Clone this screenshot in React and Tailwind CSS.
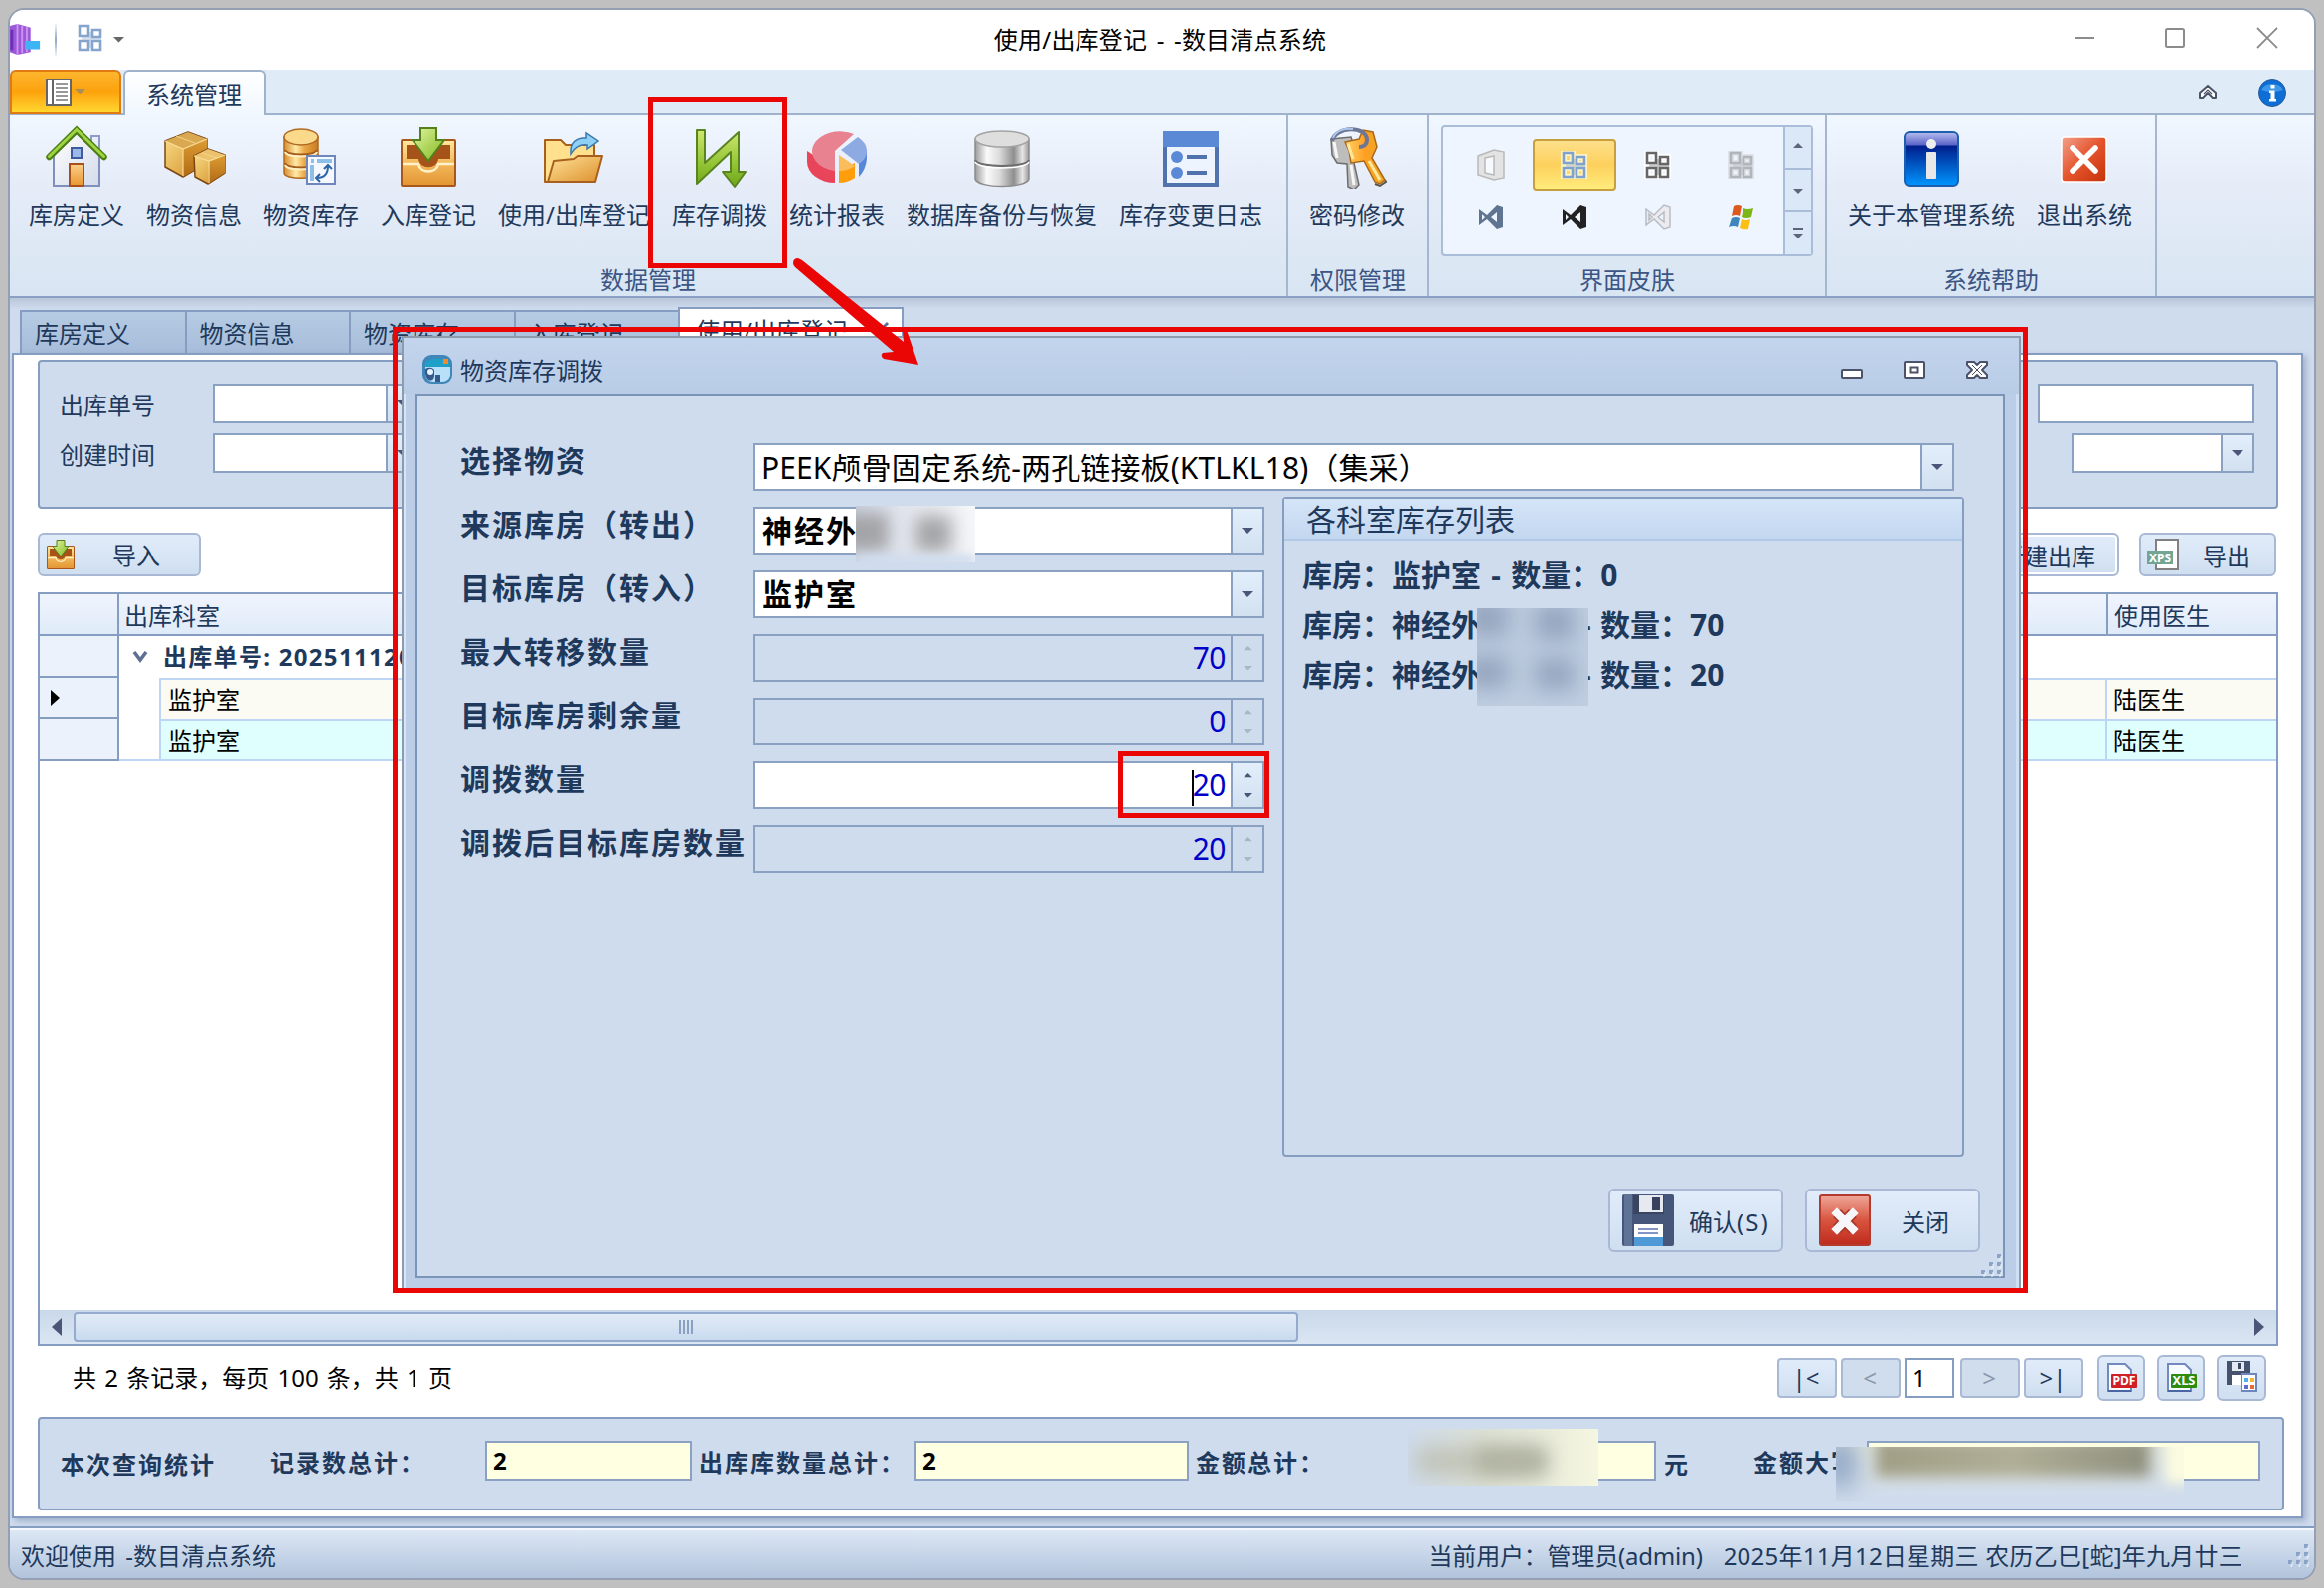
/*
==================================================
INVENTORY SYSTEM - STOCK TRANSFER SCREEN
--------------------------------------------------
Components:
TitleBar, Ribbon, DocumentTabs, OutboundPage,
StatusBar, TransferDialog

Purpose:
Desktop style page for outbound registration with
the stock transfer dialog opened on top of it.
==================================================
*/

import clsx from "clsx";

/*
==========================================
RIBBON ICONS (64 x 64)
==========================================
*/
const HouseIcon = () => (
  <svg viewBox="0 0 64 64" className="size-16">
    <defs>
      <linearGradient id="wall" x1="0" y1="0" x2="1" y2="1">
        <stop offset="0" stopColor="#ffffff" />
        <stop offset="1" stopColor="#d3daea" />
      </linearGradient>
      <linearGradient id="door" x1="0" y1="0" x2="0" y2="1">
        <stop offset="0" stopColor="#fbd08a" />
        <stop offset="1" stopColor="#e8962f" />
      </linearGradient>
    </defs>
    <rect x="47" y="11" width="8" height="18" fill="#e9eefa" stroke="#8d9cc6" strokeWidth="2" />
    <path d="M9 30 32 8 55 30V61H9Z" fill="url(#wall)" stroke="#7f90bd" strokeWidth="2" />
    <path d="M4.500 32 32 5 59.500 32" fill="none" stroke="#4d7f12" strokeWidth="6.500" strokeLinecap="round" />
    <path d="M4.500 31.500 32 4.500 59.500 31.500" fill="none" stroke="#9fd545" strokeWidth="3" strokeLinecap="round" />
    <rect x="27" y="23" width="10" height="10" fill="#9db9ea" stroke="#3c5c9f" strokeWidth="2" />
    <rect x="25" y="39" width="14" height="22" fill="url(#door)" stroke="#a8501a" strokeWidth="2" />
  </svg>
);

const BoxesIcon = () => (
  <svg viewBox="0 0 64 64" className="size-16">
    <defs>
      <linearGradient id="boxl" x1="0" y1="0" x2="1" y2="1">
        <stop offset="0" stopColor="#fbe08a" />
        <stop offset="1" stopColor="#d08a25" />
      </linearGradient>
      <linearGradient id="boxr" x1="0" y1="0" x2="0" y2="1">
        <stop offset="0" stopColor="#dd9c34" />
        <stop offset="1" stopColor="#b06a13" />
      </linearGradient>
    </defs>
    <g stroke="#7a4712" strokeWidth="1.500" strokeLinejoin="round">
      <path d="M3 16 26 7 45 14V38L21 52 3 42Z" fill="url(#boxl)" />
      <path d="M21 24 45 14V38L21 52Z" fill="url(#boxr)" stroke="none" />
      <path d="M3 16 26 7 45 14 21 24Z" fill="#d9a850" stroke="none" />
      <path d="M32 31 46 24 63 30V48L46 59 33 52Z" fill="url(#boxl)" />
      <path d="M47 36 63 30V48L46 59Z" fill="url(#boxr)" stroke="none" />
      <path d="M32 31 46 24 63 30 47 36Z" fill="#edc26c" stroke="none" />
    </g>
    <path d="M3 16 21 24 45 14M21 24V51M32 31 47 36 63 30M47 36V58" fill="none" stroke="#f8dc97" strokeWidth="1.200" />
    <path d="M14 11 33 18M40 28 55 33" fill="none" stroke="#f5d48a" strokeWidth="1" />
  </svg>
);

const StockIcon = () => (
  <svg viewBox="0 0 64 64" className="size-16">
    <defs>
      <linearGradient id="gold" x1="0" y1="0" x2="1" y2="0">
        <stop offset="0" stopColor="#d98c2a" />
        <stop offset="0.350" stopColor="#ffe9a8" />
        <stop offset="0.600" stopColor="#eba847" />
        <stop offset="1" stopColor="#c97a22" />
      </linearGradient>
    </defs>
    <path d="M5 12V48C5 55 39 55 39 48V12Z" fill="url(#gold)" stroke="#b06a22" strokeWidth="1.500" />
    <ellipse cx="22" cy="12" rx="17" ry="8" fill="#fbd98b" stroke="#b06a22" strokeWidth="1.500" />
    <path d="M6 25C8 31 36 31 38 25M6 38C8 44 36 44 38 38" fill="none" stroke="#a35c1b" strokeWidth="2" />
    <path d="M6 27C8 33 36 33 38 27M6 40C8 46 36 46 38 40" fill="none" stroke="#fff0c4" strokeWidth="2" />
    <rect x="28" y="31" width="28" height="28" fill="#f5f9ff" stroke="#6f86bd" strokeWidth="2" />
    <path d="M32 36h3M38 36h15M33 40v16" stroke="#8cc0e8" strokeWidth="4" />
    <path d="M38 53c6 0 11-3 11-12M41 49l-4 4 4 4M45 44l4-4 4 4" fill="none" stroke="#2d66a8" strokeWidth="2" />
  </svg>
);

const TrayIcon = ({ className = "size-16" }) => (
  <svg viewBox="0 0 64 64" className={className}>
    <defs>
      <linearGradient id="tray" x1="0" y1="0" x2="0" y2="1">
        <stop offset="0" stopColor="#ffe9a0" />
        <stop offset="0.500" stopColor="#f3b95c" />
        <stop offset="1" stopColor="#e39432" />
      </linearGradient>
      <linearGradient id="arrowdown" x1="0" y1="0" x2="1" y2="1">
        <stop offset="0" stopColor="#e2f5a0" />
        <stop offset="1" stopColor="#7fb81f" />
      </linearGradient>
    </defs>
    <rect x="5" y="15" width="54" height="46" rx="1" fill="url(#tray)" stroke="#a8561c" strokeWidth="2" />
    <path d="M10 20H54V34H42C41 45 23 45 22 34H10Z" fill="#a55318" />
    <path d="M6 39H22C24 49 40 49 42 39H58" fill="none" stroke="#fff2c8" strokeWidth="2.500" />
    <path d="M24 3H40V15H48L32 36 16 15H24Z" fill="url(#arrowdown)" stroke="#56801c" strokeWidth="2" />
  </svg>
);

const FolderIcon = () => (
  <svg viewBox="0 0 64 64" className="size-16">
    <defs>
      <linearGradient id="fold" x1="0" y1="0" x2="1" y2="1">
        <stop offset="0" stopColor="#ffe39a" />
        <stop offset="1" stopColor="#dd8f2b" />
      </linearGradient>
    </defs>
    <path d="M3 57V15H19L24 20H53V57Z" fill="#ffe08d" stroke="#a8601f" strokeWidth="2" strokeLinejoin="round" />
    <path d="M6 57 12 36 32 34 36 31H61L54 57Z" fill="url(#fold)" stroke="#a8601f" strokeWidth="2" strokeLinejoin="round" />
    <path d="M29 29C28 18 34 12 45 13V8L57 16 46 24V20C38 19 33 22 29 29Z" fill="#8fd0f5" stroke="#3b78b0" strokeWidth="1.500" />
  </svg>
);

const TransferIcon = () => (
  <svg viewBox="0 0 64 64" className="size-16">
    <defs>
      <linearGradient id="zig" x1="0" y1="0" x2="0" y2="1">
        <stop offset="0" stopColor="#cfe76f" />
        <stop offset="0.600" stopColor="#92c434" />
        <stop offset="1" stopColor="#6fa51c" />
      </linearGradient>
    </defs>
    <path d="M9 5H17V38L51 7V47H58L47 62 35 47H43V27L9 59Z" fill="url(#zig)" stroke="#5a8420" strokeWidth="2" strokeLinejoin="round" />
  </svg>
);

const PieIcon = () => (
  <svg viewBox="0 0 64 64" className="size-16">
    <path d="M2 26V37A28 21 0 0 0 30 58V44Z" fill="#e8455a" />
    <path d="M30 26 49 9A28 20 0 1 0 30 46Z" fill="#e98290" />
    <path d="M34 46 50 38V53Q43 58 34 58Z" fill="#ff9d0a" />
    <path d="M34 30 50 41Q43 46 34 46Z" fill="#f9bd5c" />
    <path d="M54 38 62 24V34Q61 45 54 52Z" fill="#5787d8" />
    <path d="M36 25 53 12Q62 18 62 26 62 34 54 39Z" fill="#8daae2" />
  </svg>
);

const DatabaseIcon = () => (
  <svg viewBox="0 0 64 64" className="size-16">
    <defs>
      <linearGradient id="steel" x1="0" y1="0" x2="1" y2="0">
        <stop offset="0" stopColor="#9c9c9c" />
        <stop offset="0.220" stopColor="#fafafa" />
        <stop offset="0.450" stopColor="#dcdcdc" />
        <stop offset="0.720" stopColor="#8e8e8e" />
        <stop offset="0.880" stopColor="#e6e6e6" />
        <stop offset="1" stopColor="#9a9a9a" />
      </linearGradient>
    </defs>
    <path d="M5 14V54C7 64 57 64 59 54V14Z" fill="url(#steel)" stroke="#8b8b8b" strokeWidth="1.500" />
    <ellipse cx="32" cy="14" rx="27" ry="8" fill="#dedede" stroke="#a3a3a3" strokeWidth="1.500" />
    <path d="M5 35C8 43 56 43 59 35" fill="none" stroke="#6d6d6d" strokeWidth="2" />
    <path d="M5 37C8 45 56 45 59 37" fill="none" stroke="#ffffff" strokeWidth="1.500" />
  </svg>
);

const LogIcon = () => (
  <svg viewBox="0 0 64 64" className="size-16">
    <rect x="6" y="8" width="52" height="52" fill="#eef4fd" stroke="#5073ad" strokeWidth="4" />
    <rect x="4" y="6" width="56" height="16" fill="#5b89d6" />
    <circle cx="18" cy="32" r="6" fill="#5b89d6" />
    <circle cx="18" cy="48" r="6" fill="#5b89d6" />
    <path d="M28 32H48M28 48H48" stroke="#5073ad" strokeWidth="4" />
  </svg>
);

const KeysIcon = () => (
  <svg viewBox="0 0 64 64" className="size-16">
    <defs>
      <linearGradient id="keyg" x1="0" y1="0" x2="1" y2="0">
        <stop offset="0" stopColor="#ffd56b" />
        <stop offset="0.500" stopColor="#ff9f22" />
        <stop offset="1" stopColor="#e9a825" />
      </linearGradient>
    </defs>
    <path d="M6 14 26 12 32 32 29 38 34 60 29 65 23 62 22 39 12 38 7 30Z" fill="#bdbdbd" stroke="#6d6d6d" strokeWidth="1.500" />
    <path d="M9 17 12 33M26 40 29 60" stroke="#f6f6f6" strokeWidth="3" />
    <path d="M60 55 61 57 55 61 50 59" fill="none" stroke="#55534c" strokeWidth="2" />
    <path d="M20 17 34 14 38 5 48 7 52 22 47 33 60 55 55 59 50 57 39 36 26 38 24 26Z" fill="url(#keyg)" stroke="#a86a1a" strokeWidth="1.500" />
    <path d="M44 36 55 55M23 19 28 34" stroke="#ffe79b" strokeWidth="3" />
    <path d="M7 16C10 1 42 0 42 15 42 20 38 22 34 22" fill="none" stroke="#6d7694" strokeWidth="4" />
    <path d="M8 13C11 4 22 3 28 4" fill="none" stroke="#a9c6e8" strokeWidth="2" />
  </svg>
);

const AboutIcon = () => (
  <svg viewBox="0 0 64 64" className="size-16">
    <defs>
      <linearGradient id="about" x1="0" y1="0" x2="0" y2="1">
        <stop offset="0" stopColor="#b9bff0" />
        <stop offset="0.240" stopColor="#5a64c8" />
        <stop offset="0.260" stopColor="#001e8c" />
        <stop offset="1" stopColor="#0096ff" />
      </linearGradient>
    </defs>
    <rect x="5" y="7" width="54" height="54" rx="5" fill="url(#about)" stroke="#1c5faf" strokeWidth="2" />
    <circle cx="32" cy="19" r="5" fill="#eeeeee" />
    <rect x="27" y="27" width="10" height="27" rx="1" fill="#e8e8e8" />
  </svg>
);

const ExitIcon = () => (
  <svg viewBox="0 0 64 64" className="size-16">
    <defs>
      <linearGradient id="exit" x1="0" y1="0" x2="1" y2="1">
        <stop offset="0" stopColor="#f3a28c" />
        <stop offset="0.500" stopColor="#e4532c" />
        <stop offset="1" stopColor="#c4330a" />
      </linearGradient>
    </defs>
    <rect x="9" y="12" width="45" height="45" rx="3" fill="url(#exit)" stroke="#ffffff" strokeWidth="1.500" />
    <path d="M20 23 43 46M43 23 20 46" stroke="#ffffff" strokeWidth="5.500" strokeLinecap="round" />
  </svg>
);

/*
==========================================
SMALL GLYPHS
==========================================
*/
const Triangle = ({ dir = "down", size = 12, color = "#4b5578" }) => (
  <svg viewBox="0 0 12 6" width={size} height={size / 2} className={dir === "up" ? "rotate-180" : ""}>
    <path d="M0 0H12L6 6Z" fill={color} />
  </svg>
);

const OfficeGlyph = ({ color = "#7fa2cf", halo = "none" }) => (
  <svg viewBox="0 0 28 28" className="size-7">
    <g fill="none" stroke={halo} strokeWidth="6">
      <path d="M3 2h9v10H3zM16 6h8v7h-8zM3 17h9v9H3zM16 17h8v9h-8z" />
    </g>
    <path d="M14 8V24M5 14.500H25" stroke={color} strokeWidth="2.500" strokeOpacity="0.350" />
    <g fill="none" stroke={color} strokeWidth="2.600">
      <path d="M3 2h9v10H3zM16 6h8v7h-8zM3 17h9v9H3zM16 17h8v9h-8z" />
    </g>
  </svg>
);

const VsGlyph = ({ fill, stroke = "none" }) => (
  <svg viewBox="0 0 28 28" className="size-7">
    <path d="M2 6 10 12 20 2 26 4V24L20 26 10 16 2 22ZM5 11V17L8 14ZM20 9 14 14 20 19Z" fill={fill} fillRule="evenodd" stroke={stroke} strokeWidth="1.500" />
  </svg>
);

const DoorGlyph = () => (
  <svg viewBox="0 0 30 34" className="h-[34px] w-[30px]">
    <path d="M2 8 18 2 28 4V30L18 32 2 27Z" fill="#e3e3e3" stroke="#b9b9b9" strokeWidth="1.500" />
    <path d="M9 10 18 8V27L9 25Z" fill="#f6faff" stroke="#b9b9b9" strokeWidth="1.500" />
  </svg>
);

const WindowsGlyph = () => (
  <svg viewBox="0 0 28 28" className="size-7">
    <path d="M6 3Q10 1 14 3L12 13Q8 11 4 13Z" fill="#dd5a1c" />
    <path d="M16 5Q20 7 26 5L24 14Q19 16 14 14Z" fill="#7cb518" />
    <path d="M4 15Q8 13 12 15L10 24Q6 22 1 24Z" fill="#3f86bd" />
    <path d="M14 16Q18 18 23 16L21 26Q16 27 12 25Z" fill="#fdbf13" />
  </svg>
);

const SizeGrip = () => (
  <svg viewBox="0 0 24 24" className="size-6">
    <path d="M18 0h4v4h-4zM10 8h4v4h-4zM18 8h4v4h-4zM2 16h4v4h-4zM10 16h4v4h-4zM18 16h4v4h-4z" fill="#8ba3c6" />
    <path d="M22 2v4h-2M14 10v4h-2M22 10v4h-2M6 18v4h-2M14 18v4h-2M22 18v4h-2" fill="none" stroke="#eef4fc" strokeWidth="1" />
  </svg>
);

/*
==========================================
TITLE BAR
==========================================
*/
const TitleBar = () => (
  <div className="relative flex h-[60px] shrink-0 items-center bg-white">
    <svg viewBox="0 0 34 34" className="h-[34px] w-[32px]">
      <path d="M0 2 8 0 22 4V30L8 33 0 30Z" fill="#9b59d8" />
      <path d="M8 0V33M13 2V31M18 3V30" stroke="#cc93f5" strokeWidth="2" />
      <path d="M2 6v22" stroke="#6c2fb8" strokeWidth="3" />
      <path d="M16 18h16v9H16z" fill="#3fb4f5" />
    </svg>
    <div className="ml-[13px] h-9 w-0.5 bg-gradient-to-b from-white via-[#8fa6c6] to-white"></div>
    <div className="mt-[-4px] ml-[20px]"><OfficeGlyph color="#86a5cd" /></div>
    <div className="ml-[9px]"><Triangle size={11} color="#666666" /></div>

    <div className="absolute inset-x-0 top-0 pr-[4px] text-center leading-[59px] tracking-[0.200px] [word-spacing:3px] text-black">
      使用/出库登记 - -数目清点系统
    </div>

    {/* Window Controls */}
    <div className="mr-[36px] ml-auto flex items-center gap-[70px] pb-1">
      <svg viewBox="0 0 22 22" className="size-[22px]"><path d="M1 11H21" stroke="#8c8c8c" strokeWidth="2" /></svg>
      <svg viewBox="0 0 22 22" className="size-[22px]"><rect x="1" y="2" width="18" height="18" rx="1.500" fill="none" stroke="#8c8c8c" strokeWidth="2" /></svg>
      <svg viewBox="0 0 22 22" className="size-[22px]"><path d="M1 1 21 21M21 1 1 21" stroke="#8c8c8c" strokeWidth="1.800" /></svg>
    </div>
  </div>
);

/*
==========================================
RIBBON
==========================================
*/
const dataActions = [
  { label: "库房定义", Icon: HouseIcon },
  { label: "物资信息", Icon: BoxesIcon },
  { label: "物资库存", Icon: StockIcon },
  { label: "入库登记", Icon: TrayIcon },
  { label: "使用/出库登记", Icon: FolderIcon },
  { label: "库存调拨", Icon: TransferIcon },
  { label: "统计报表", Icon: PieIcon },
  { label: "数据库备份与恢复", Icon: DatabaseIcon },
  { label: "库存变更日志", Icon: LogIcon },
];

const RibbonButton = ({ label, Icon }) => (
  <div className="flex flex-col items-center whitespace-nowrap">
    <Icon />
    <span className="mt-[12px] leading-7">{label}</span>
  </div>
);

const RibbonGroup = ({ title, className, children }) => (
  <div className={clsx("flex shrink-0 flex-col border-r-2 border-[#a5b6d1] pt-[10px]", className)}>
    <div className="h-[142px]">{children}</div>
    <div className="text-center leading-7 text-[#3b5584]">{title}</div>
  </div>
);

const Ribbon = () => (
  <div className="shrink-0">

    {/* Ribbon Tab Strip */}
    <div className="flex h-[46px] items-start bg-[#dfebf7] shadow-[inset_0_-2px_#9fb2cb]">
      <div className="flex h-[45px] w-[112px] items-center justify-center gap-[3px] rounded-t-md border-2 border-[#e07b12] bg-linear-to-b from-[#fdb62c] via-[#fca20a] to-[#ffd62e]">
        <svg viewBox="0 0 26 28" className="h-[28px] w-[26px]">
          <rect x="1" y="1" width="24" height="26" fill="#ffffff" stroke="#666666" strokeWidth="2" />
          <path d="M7 1V27" stroke="#666666" strokeWidth="2" />
          <path d="M10 6H22M10 10H22M10 14H22M10 18H22M10 22H22" stroke="#777777" strokeWidth="1.700" />
        </svg>
        <Triangle size={11} color="#a98d55" />
      </div>
      <div className="ml-[2px] h-[46px] w-[144px] rounded-t-md border-2 border-b-0 border-[#9fb2cb] bg-linear-to-b from-white to-[#f0f7ff] pr-[2px] text-center leading-[47px]">
        系统管理
      </div>
      <div className="mr-[28px] ml-auto flex h-full items-center gap-[41px] pt-[2px]">
        <svg viewBox="0 0 20 16" className="h-4 w-5">
          <path d="M2 8 10 1 18 8V13H15L10 8 5 13H2Z" fill="#ffffff" stroke="#4c5368" strokeWidth="2" strokeLinejoin="round" />
          <path d="M6 9 10 5 14 9" fill="none" stroke="#4c5368" strokeWidth="1.200" />
        </svg>
        <svg viewBox="0 0 28 28" className="size-7">
          <circle cx="14" cy="14" r="13.500" fill="#0d6fd6" stroke="#2b5a98" />
          <path d="M3 11A12 10 0 0 1 25 11Q14 15 3 11" fill="#5fb0f5" fillOpacity="0.600" />
          <path d="M12.500 6h4v3.500h-4zM11 11.500h5.500V20H18v2.500h-7V20h1.500v-6H11z" fill="#ffffff" />
        </svg>
      </div>
    </div>

    {/* Ribbon Groups */}
    <div className="flex h-[184px] border-b-2 border-[#8a9fc3] bg-linear-to-b from-[#f0f7ff] via-[#e5ecf8] via-40% to-[#d8e5f2]">
      <RibbonGroup title="数据管理" className="w-[1286px]">
        <div className="flex gap-[22px] pl-[19px]">
          {dataActions.map((item) => (
            <RibbonButton key={item.label} {...item} />
          ))}
        </div>
      </RibbonGroup>

      <RibbonGroup title="权限管理" className="w-[142px]">
        <div className="flex justify-center pr-[2px]">
          <RibbonButton label="密码修改" Icon={KeysIcon} />
        </div>
      </RibbonGroup>

      {/* Skin Gallery */}
      <RibbonGroup title="界面皮肤" className="w-[400px]">
        <div className="ml-[12px] flex h-[132px] w-[374px] rounded border-2 border-[#a9bcd8] bg-[#eef5fe]">
          <div className="grid h-[104px] flex-1 grid-cols-[84px_84px_84px_84px] grid-rows-[52px_52px] place-items-center pt-[12px] pl-[6px]">
            <DoorGlyph />
            <div className="flex h-[52px] w-[84px] items-center justify-center rounded border-2 border-[#c79f3f] bg-linear-to-b from-[#fde08a] via-[#fdd05c] to-[#ffec7c]">
              <OfficeGlyph color="#7fa2cf" halo="#fff3c4" />
            </div>
            <OfficeGlyph color="#666666" halo="#ffffff" />
            <OfficeGlyph color="#b0b4bb" halo="#dfe2e6" />
            <VsGlyph fill="#5e7490" />
            <VsGlyph fill="#222222" />
            <VsGlyph fill="#ececf0" stroke="#b8bcc4" />
            <WindowsGlyph />
          </div>
          <div className="grid w-[29px] grid-rows-3 divide-y-2 divide-[#a9bcd8] border-l-2 border-[#a9bcd8] bg-[#dbe8f7]">
            <div className="flex items-center justify-center pb-1"><Triangle dir="up" size={10} color="#5d6678" /></div>
            <div className="flex items-center justify-center pt-1"><Triangle size={10} color="#5d6678" /></div>
            <div className="flex flex-col items-center justify-center gap-1">
              <div className="h-0.5 w-[10px] bg-[#5d6678]"></div>
              <Triangle size={10} color="#5d6678" />
            </div>
          </div>
        </div>
      </RibbonGroup>

      <RibbonGroup title="系统帮助" className="w-[332px]">
        <div className="flex gap-[22px] pl-[21px]">
          <RibbonButton label="关于本管理系统" Icon={AboutIcon} />
          <RibbonButton label="退出系统" Icon={ExitIcon} />
        </div>
      </RibbonGroup>
    </div>
  </div>
);

/*
==========================================
DOCUMENT TABS
==========================================
*/
const tabs = ["库房定义", "物资信息", "物资库存", "入库登记"];

const DocumentTabs = () => (
  <div className="flex h-[55px] shrink-0 items-end bg-linear-to-b from-[#b9c6da] via-[#cfdcee] via-20% to-[#cfdcee] pl-[10px]">
    {tabs.map((tab) => (
      <div key={tab} className="h-[43px] w-[165.500px] border-2 border-r-0 border-b-0 border-[#849dc0] bg-linear-to-b from-[#b6cce4] to-[#a6bcd9] pl-[13px] leading-[44px]">
        {tab}
      </div>
    ))}
    <div className="flex h-[46px] w-[227px] justify-between border-2 border-b-0 border-[#849dc0] bg-white pr-[12px] pl-[16px] leading-[43px]">
      <span>使用/出库登记</span>
      <svg viewBox="0 0 16 16" className="mt-[12px] size-4"><path d="M2 2 14 14M14 2 2 14" stroke="#5d6f92" strokeWidth="3" /></svg>
    </div>
  </div>
);

/*
==========================================
SHARED CONTROLS
==========================================
*/
const DropButton = ({ className }) => (
  <div className={clsx("flex items-center justify-center border-l-2 border-[#8ba1c2] bg-linear-to-b from-[#e3eefb] to-[#d2e0f0]", className)}>
    <Triangle />
  </div>
);

const PagerButton = ({ children, disabled }) => (
  <div className={clsx("flex h-10 w-[60px] items-center justify-center rounded border-2 border-[#a9b8d4] pr-[2px]",
    disabled ? "bg-[#cfdded] text-[#8a97ab]" : "bg-linear-to-b from-[#e1ecfa] to-[#cfdff0]")}>
    {children}
  </div>
);

const FileGlyph = ({ text, color }) => (
  <svg viewBox="0 0 32 32" className="size-8">
    <path d="M3 2H20L26 8V29H3Z" fill="#f7faff" stroke="#7189bd" strokeWidth="2" />
    <path d="M3 29H26" stroke="#4b66a5" strokeWidth="2" />
    <rect x="6" y="12" width="26" height="14" rx="1" fill={color} />
    <text x="19" y="23" fontSize="12" fontWeight="700" textAnchor="middle" textLength="23" lengthAdjust="spacingAndGlyphs" fill="#ffffff">{text}</text>
  </svg>
);

/*
==========================================
OUTBOUND PAGE
------------------------------------------
Filter area, data grid, pager and totals.
==========================================
*/
const rows = [
  { room: "监护室", doctor: "陆医生", bg: "bg-[#fbfaf3]", current: true },
  { room: "监护室", doctor: "陆医生", bg: "bg-[#dffffe]" },
];

const SumInput = ({ className, children }) => (
  <div className={clsx("h-10 border-2 border-[#8ba1c2] bg-[#ffffe1] pl-[6px] leading-[36px] text-black", className)}>
    {children}
  </div>
);

const OutboundPage = () => (
  <div className="mr-[11px] ml-[2px] flex h-[1173px] shrink-0 flex-col border-2 border-[#849dc0] bg-white pl-[24px] shadow-[3px_3px_6px_rgba(90,110,150,0.4)]">

    {/* Filter Area */}
    <div className="mt-[5px] flex h-[150px] w-[2254px] justify-between rounded border-2 border-[#849dc0] bg-[#cfdcee] pr-[22px] pl-[20px]">
      <div className="flex flex-col gap-[10px] pt-[22px]">
        {["出库单号", "创建时间"].map((label) => (
          <div key={label} className="flex h-10 items-center">
            <span className="w-[154px] pt-[3px]">{label}</span>
            <div className="flex h-10 w-[208px] border-2 border-[#8ba1c2] bg-white">
              <DropButton className="ml-auto w-[32px]" />
            </div>
          </div>
        ))}
      </div>
      <div className="flex flex-col items-end gap-[10px] pt-[22px]">
        <div className="h-10 w-[218px] border-2 border-[#8ba1c2] bg-white"></div>
        <div className="flex h-10 w-[184px] border-2 border-[#8ba1c2] bg-white">
          <DropButton className="ml-auto w-[32px]" />
        </div>
      </div>
    </div>

    {/* Toolbar */}
    <div className="mt-[24px] flex h-[44px] w-[2252px] justify-between">
      <div className="flex w-[164px] items-center rounded-md border-2 border-[#a9b8d4] bg-linear-to-b from-[#e1ecfa] to-[#cfdff0] pl-[5px]">
        <TrayIcon className="size-8" />
        <span className="ml-[36px] pt-[2px]">导入</span>
      </div>
      <div className="flex gap-[20px]">
        <div className="w-[170px] rounded-md border-2 border-[#a9b8d4] bg-linear-to-b from-[#e1ecfa] to-[#cfdff0] pr-[22px] text-right leading-[43px] shadow-[inset_0_0_0_2px_#ffffff]">
          新建出库
        </div>
        <div className="flex w-[138px] items-center rounded-md border-2 border-[#a9b8d4] bg-linear-to-b from-[#e1ecfa] to-[#cfdff0] pl-[6px]">
          <svg viewBox="0 0 32 32" className="size-8">
            <rect x="9" y="1" width="22" height="30" fill="#ffffff" stroke="#808080" strokeWidth="2" />
            <rect x="0" y="12" width="26" height="14" fill="#74a593" />
            <text x="13" y="23.500" fontSize="12" fontWeight="700" textAnchor="middle" textLength="22" lengthAdjust="spacingAndGlyphs" fill="#ffffff">XPS</text>
          </svg>
          <span className="ml-[24px] pt-[3px]">导出</span>
        </div>
      </div>
    </div>

    {/* Data Grid */}
    <div className="mt-[16px] flex h-[758px] w-[2254px] flex-col border-2 border-[#849dc0]">
      <div className="flex h-[42px] border-b-2 border-[#849dc0] bg-linear-to-b from-[#f0f4fd] to-[#dfebf9] leading-[43px]">
        <div className="w-[80px] border-r-2 border-[#849dc0]"></div>
        <div className="w-[2001px] border-r-2 border-[#849dc0] pl-[5px]">出库科室</div>
        <div className="pl-[6px]">使用医生</div>
      </div>

      {/* Group Row */}
      <div className="flex h-[42px]">
        <div className="w-[80px] border-r-2 border-b-2 border-[#849dc0] bg-[#ebf2fc]"></div>
        <svg viewBox="0 0 16 12" className="mt-[15px] ml-[13px] h-[12px] w-4"><path d="M2 1 8 9 14 1" fill="none" stroke="#5d6f92" strokeWidth="3.500" /></svg>
        <span className="ml-[15px] leading-[42px] font-bold tracking-[1.300px]">出库单号: 202511120001</span>
      </div>

      {/* Detail Rows */}
      {rows.map((row, index) => (
        <div key={index} className="flex h-[42px] leading-[43px] text-black">
          <div className="flex w-[80px] items-center border-r-2 border-b-2 border-[#849dc0] bg-[#ebf2fc] pl-[11px]">
            {row.current && (
              <svg viewBox="0 0 9 16" className="h-4 w-[9px]"><path d="M0 0 9 8 0 16Z" fill="#000000" /></svg>
            )}
          </div>
          <div className={clsx("w-[40px]", index === 1 && "border-b-2 border-[#bfd5f5]")}></div>
          <div className={clsx("flex flex-1 border-l-2 border-[#bfd5f5] shadow-[inset_0_2px_#bfd5f5]", row.bg, index === 1 && "border-b-2")}>
            <div className="w-[1958px] border-r-2 border-[#bfd5f5] pl-[7px]">{row.room}</div>
            <div className="pl-[6px]">{row.doctor}</div>
          </div>
        </div>
      ))}

      {/* Horizontal Scrollbar */}
      <div className="mt-auto flex h-[34px] items-center bg-linear-to-b from-[#c9d8ea] to-[#dbe6f3] pr-[12px] pl-[12px]">
        <svg viewBox="0 0 10 18" className="h-[18px] w-[10px]"><path d="M10 0V18L0 9Z" fill="#4b5578" /></svg>
        <div className="ml-[12px] flex h-[30px] w-[1232px] items-center justify-center gap-[2px] rounded border-2 border-[#94abcd] bg-linear-to-b from-[#e2ebf7] to-[#c9dbef]">
          {[1, 2, 3, 4].map((bar) => (
            <div key={bar} className="h-[14px] w-0.5 bg-[#8ba1c2]"></div>
          ))}
        </div>
        <svg viewBox="0 0 10 18" className="ml-auto h-[18px] w-[10px]"><path d="M0 0V18L10 9Z" fill="#4b5578" /></svg>
      </div>
    </div>

    {/* Pager */}
    <div className="mt-[9px] flex h-[48px] items-center pl-[35px]">
      <span className="text-black [word-spacing:2px]">共 2 条记录，每页 100 条，共 1 页</span>
      <div className="mr-[35px] ml-auto flex items-center">
        <PagerButton>|&lt;</PagerButton>
        <div className="ml-1"><PagerButton disabled>&lt;</PagerButton></div>
        <div className="mr-[6px] ml-[4px] h-10 w-[50px] border-2 border-[#849dc0] bg-white pl-[6px] leading-9 text-black">1</div>
        <PagerButton disabled>&gt;</PagerButton>
        <div className="ml-1"><PagerButton>&gt;|</PagerButton></div>
        <div className="ml-[14px] flex gap-[12px]">
          <div className="flex h-[46px] w-12 items-center justify-center rounded-md border-2 border-[#a9b8d4] bg-linear-to-b from-[#e1ecfa] to-[#cfdff0]">
            <FileGlyph text="PDF" color="#cf2026" />
          </div>
          <div className="flex h-[46px] w-12 items-center justify-center rounded-md border-2 border-[#a9b8d4] bg-linear-to-b from-[#e1ecfa] to-[#cfdff0]">
            <FileGlyph text="XLS" color="#2e8b0e" />
          </div>
          <div className="flex h-[46px] w-[50px] items-center justify-center rounded-md border-2 border-[#a9b8d4] bg-linear-to-b from-[#e1ecfa] to-[#cfdff0] pb-1">
            <svg viewBox="0 0 34 32" className="h-8 w-[34px]">
              <rect x="2" y="1" width="24" height="24" fill="#46536f" />
              <rect x="7" y="2" width="13" height="9" fill="#e4e9f1" />
              <rect x="13" y="3" width="4" height="6" fill="#3b4660" />
              <rect x="7" y="15" width="12" height="10" fill="#ffffff" />
              <rect x="17" y="14" width="15" height="17" fill="#fbfdff" stroke="#6f86bd" strokeWidth="2" />
              <path d="M20 18h4v4h-4z" fill="#4fb1e8" />
              <path d="M26 18h4v4h-4z" fill="#f5b52e" />
              <path d="M20 25h4v4h-4z" fill="#5a6fd0" />
              <path d="M26 25h4v4h-4z" fill="#e66a35" />
            </svg>
          </div>
        </div>
      </div>
    </div>

    {/* Totals */}
    <div className="relative mt-[15px] flex h-[94px] w-[2260px] items-center rounded border-2 border-[#849dc0] bg-[#cfdcee] pb-[6px] pl-[21px] font-bold tracking-[2px] whitespace-nowrap">
      <span className="w-[211px] pt-[8px]">本次查询统计</span>
      <span className="w-[216px] pt-[4px]">记录数总计：</span>
      <SumInput className="w-[208px]">2</SumInput>
      <span className="ml-[7px] w-[217px] pt-[4px]">出库库数量总计：</span>
      <SumInput className="w-[276px]">2</SumInput>
      <span className="ml-[7px] w-[224px] pt-[4px]">金额总计：</span>
      <SumInput className="w-[239px]" />
      <span className="ml-[8px] w-[90px] pt-[8px]">元</span>
      <span className="w-[114px] pt-[4px]">金额大写</span>
      <SumInput className="w-[396px]" />

      {/* Masked Amounts */}
      <div className="absolute top-[10px] left-[1376px] h-[57px] w-[192px] overflow-hidden bg-linear-to-r from-[#cfdcee] via-[#dde2d6] via-40% to-[#f5f6e0]">
        <div className="absolute top-[20px] left-[8px] h-6 w-[130px] bg-[#bcbdad] blur-[12px]"></div>
        <div className="absolute top-[20px] left-[70px] h-6 w-[68px] bg-[#b0b2a0] blur-[9px]"></div>
      </div>
      <div className="absolute top-[28px] left-[1807px] h-[54px] w-[350px] overflow-hidden bg-linear-to-b from-[#dfe4dc] to-[#cfdcee]">
        <div className="absolute -top-2 -left-3 h-12 w-8 bg-[#8fa6c8] blur-md"></div>
        <div className="absolute -top-2 left-[40px] h-[38px] w-[276px] bg-linear-to-r from-[#a19e86] via-[#b0ae96] to-[#8f907e] blur-[7px]"></div>
        <div className="absolute -top-2 left-[332px] h-[44px] w-[40px] bg-[#fbfbdf] blur-[6px]"></div>
      </div>
    </div>
  </div>
);

/*
==========================================
STATUS BAR
==========================================
*/
const StatusBar = () => (
  <div className="mt-auto flex h-[52px] shrink-0 items-center border-t-2 border-[#849dc0] bg-linear-to-b from-[#dfe9f6] to-[#b1c4dc] pt-[6px] pr-[4px] pl-[11px] shadow-[inset_0_2px_#f5f9fe]">
    <span className="[word-spacing:3px]">欢迎使用 -数目清点系统</span>
    <span className="ml-auto tracking-[-0.200px]">当前用户：管理员(admin)</span>
    <span className="mr-[44px] ml-[21px] tracking-[0.240px]">2025年11月12日星期三 农历乙巳[蛇]年九月廿三</span>
    <SizeGrip />
  </div>
);

/*
==========================================
STOCK TRANSFER DIALOG
==========================================
*/
const fields = [
  { label: "来源库房（转出）", text: "神经外", type: "select" },
  { label: "目标库房（转入）", text: "监护室", type: "select" },
  { label: "最大转移数量", text: "70", type: "locked" },
  { label: "目标库房剩余量", text: "0", type: "locked" },
  { label: "调拨数量", text: "20", type: "spin" },
  { label: "调拨后目标库房数量", text: "20", type: "locked" },
];

const TransferField = ({ label, text, type }) => (
  <div className="flex h-16">
    <span className="w-[295px] text-[30px] leading-9 font-bold tracking-[2px] whitespace-nowrap">{label}</span>
    <div className={clsx("flex h-12 w-[514px] border-2 border-[#8ba1c2] text-[30px] leading-[44px]", type === "locked" ? "bg-[#cfdcee]" : "bg-white")}>
      {type === "select" ? (
        <>
          <span className="flex-1 pl-[7px] font-bold tracking-[2px] text-black">{text}</span>
          <DropButton className="w-[32px]" />
        </>
      ) : (
        <>
          <span className="flex-1 pr-[5px] text-right tracking-[-0.500px] text-[#0000c8]">
            {type === "spin" && <span className="mr-[-1px] inline-block h-9 w-0.5 bg-black align-middle"></span>}
            {text}
          </span>
          <div className={clsx("flex w-[32px] flex-col items-center justify-center gap-[16px] border-l-2 border-[#8ba1c2]", type === "spin" && "bg-linear-to-b from-[#e3eefb] to-[#d2e0f0]")}>
            <Triangle dir="up" size={9} color={type === "spin" ? "#4b5578" : "#a9b6ca"} />
            <Triangle size={9} color={type === "spin" ? "#4b5578" : "#a9b6ca"} />
          </div>
        </>
      )}
    </div>
  </div>
);

const TransferDialog = () => (
  <div className="absolute top-[338px] left-[404px] flex h-[960px] w-[1629px] flex-col border-2 border-[#8e9bad] bg-[#bccee7] shadow-[inset_2px_2px_#d6e6f8,inset_-3px_0_#cfdff4]">

    {/* Dialog Title */}
    <div className="flex h-[56px] shrink-0 items-center bg-linear-to-b from-[#c3d5ed] to-[#b9cce6] pt-[8px] pr-[31px] pl-[18px]">
      <svg viewBox="0 0 32 32" className="h-8 w-8">
        <rect x="1" y="1" width="30" height="29" rx="9" fill="#3f87b8" />
        <path d="M4 8Q16 1 28 8V14H4Z" fill="#1fa0c8" />
        <path d="M22 5h5v5h-5z" fill="#f08a2c" />
        <path d="M4 13H29V22Q27 28 20 28H12Q5 28 4 20Z" fill="#b8e0f8" />
        <path d="M4 15q6-3 9 1v6q-1 6-6 4-4-4-3-11z" fill="#36588c" />
        <circle cx="9" cy="18" r="3" fill="#e6f4ff" />
        <path d="M14 21h5v7h-5z" fill="#36588c" />
      </svg>
      <span className="ml-[7px] pt-[2px]">物资库存调拨</span>
      <div className="ml-auto flex items-end gap-[41px] pb-[1px]">
        <svg viewBox="0 0 22 18" className="h-[18px] w-[22px]"><rect x="1" y="9" width="20" height="8" rx="1" fill="#ffffff" stroke="#4c5368" strokeWidth="2" /></svg>
        <svg viewBox="0 0 22 18" className="h-[18px] w-[22px]">
          <rect x="1" y="1" width="20" height="16" rx="1" fill="#ffffff" stroke="#4c5368" strokeWidth="2" />
          <rect x="7.500" y="6.500" width="7" height="5" fill="#ffffff" stroke="#4c5368" strokeWidth="2" />
        </svg>
        <svg viewBox="0 0 22 18" className="h-[18px] w-[22px]">
          <path d="M1 1H8L11 4 14 1H21V4L16 9 21 14V17H14L11 14 8 17H1V14L6 9 1 4Z" fill="#ffffff" stroke="#4c5368" strokeWidth="2" strokeLinejoin="round" />
          <path d="M6 4 16 14M16 4 6 14" stroke="#4c5368" strokeWidth="1" />
        </svg>
      </div>
    </div>

    {/* Dialog Body */}
    <div className="relative mr-[14px] ml-[12px] h-[890px] border-2 border-[#7b95b8] bg-[#cfdcee] pl-[43px]">

      {/* Material Selector */}
      <div className="flex h-16 pt-[48px]">
        <span className="w-[295px] shrink-0 text-[30px] leading-9 font-bold tracking-[2px]">选择物资</span>
        <div className="flex h-12 w-[1208px] shrink-0 border-2 border-[#8ba1c2] bg-white text-[30px] leading-[45px] text-black">
          <span className="flex-1 pl-[6px] tracking-[0.120px]">PEEK颅骨固定系统-两孔链接板(KTLKL18)（集采）</span>
          <DropButton className="w-[32px]" />
        </div>
      </div>

      <div className="mt-[38px] flex">
        <div className="pt-[10px]">
          {fields.map((field) => (
            <TransferField key={field.label} {...field} />
          ))}
        </div>

        {/* Stock By Department */}
        <div className="ml-[18px] h-[664px] w-[686px] rounded border-2 border-[#849dc0] text-[30px]">
          <div className="h-[42px] border-b-2 border-[#b0c9e6] bg-linear-to-b from-[#d5e5f8] to-[#c3d7f0] pl-[22px] leading-[41px]">
            各科室库存列表
          </div>
          <div className="pt-[10px] pl-[18px] leading-[50px] font-bold">
            <div className="[word-spacing:2.500px]">库房：监护室 - 数量：0</div>
            <div className="flex"><span className="w-[281px]">库房：神经外</span><span className="w-[19px]">-</span>数量：70</div>
            <div className="flex"><span className="w-[281px]">库房：神经外</span><span className="w-[19px]">-</span>数量：20</div>
          </div>
        </div>
      </div>

      {/* Dialog Actions */}
      <div className="mt-[32px] mr-[23px] flex justify-end gap-[22px]">
        <div className="flex h-16 w-[176px] items-center rounded-md border-2 border-[#a9b8d4] bg-linear-to-b from-[#e1ecfa] to-[#cfdff0] pl-[12px]">
          <svg viewBox="0 0 52 52" className="size-[52px]">
            <rect width="52" height="52" rx="2" fill="#46567a" />
            <path d="M2 0H10V52H2Z" fill="#6f87a8" fillOpacity="0.600" />
            <rect x="11" y="1" width="31" height="19" fill="#3a4560" />
            <rect x="17" y="1" width="24" height="17" fill="#e6eaf0" />
            <rect x="30" y="3" width="8" height="13" fill="#39425c" />
            <rect x="12" y="30" width="29" height="22" fill="#ffffff" />
            <rect x="12" y="43" width="29" height="9" fill="#4f9ad6" />
            <path d="M16 35H36M16 39H36" stroke="#8494c4" strokeWidth="2" />
          </svg>
          <span className="ml-[15px] pt-[4px]">确认<span className="tracking-[2px]">(S)</span></span>
        </div>
        <div className="flex h-16 w-[176px] items-center rounded-md border-2 border-[#a9b8d4] bg-linear-to-b from-[#e1ecfa] to-[#cfdff0] pl-[12px]">
          <svg viewBox="0 0 52 52" className="size-[52px]">
            <defs>
              <linearGradient id="closebtn" x1="0" y1="0" x2="0" y2="1">
                <stop offset="0" stopColor="#efa89b" />
                <stop offset="0.500" stopColor="#d8553f" />
                <stop offset="1" stopColor="#bf2a1d" />
              </linearGradient>
            </defs>
            <rect x="1" y="1" width="50" height="50" rx="2" fill="url(#closebtn)" stroke="#b33a2c" strokeWidth="2" />
            <path d="M18 19 34 35M34 19 18 35" stroke="#a83526" strokeWidth="11" />
            <path d="M18 19 34 35M34 19 18 35" stroke="#f7f7fa" strokeWidth="8" strokeLinecap="square" />
          </svg>
          <span className="ml-[31px] pt-[4px]">关闭</span>
        </div>
      </div>
      <div className="absolute right-0 -bottom-0.5"><SizeGrip /></div>

      {/* Masked Room Names */}
      <div className="absolute top-[111px] left-[441px] h-[57px] w-[120px] overflow-hidden bg-linear-to-r from-[#cdd3df] via-[#e8ebf2] to-[#f5f6f8]">
        <div className="absolute top-[8px] -left-3 h-9 w-11 bg-[#a3a4a6] blur-[8px]"></div>
        <div className="absolute top-[10px] left-[60px] h-9 w-9 bg-[#a3a4a6] blur-[9px]"></div>
        <div className="absolute -bottom-1 left-0 h-3 w-full bg-[#cfdcee] blur-[5px]"></div>
      </div>
      <div className="absolute top-[214px] left-[1066px] h-[98px] w-[112px] overflow-hidden bg-[#bfcee1]">
        <div className="absolute -top-2 -left-3 h-9 w-11 bg-[#94a4be] blur-[11px]"></div>
        <div className="absolute -top-1 left-[58px] h-9 w-10 bg-[#94a4be] blur-[11px]"></div>
        <div className="absolute top-[48px] -left-3 h-8 w-11 bg-[#94a4be] blur-[11px]"></div>
        <div className="absolute top-[50px] left-[58px] h-8 w-10 bg-[#94a4be] blur-[11px]"></div>
      </div>
    </div>
  </div>
);

/*
==========================================
APP
==========================================
*/
export default function App() {
  return (
    <div className="relative h-[1598px] w-[2338px] overflow-hidden bg-[#c0c0c0] pt-[8px] pl-[8px] font-['Noto_Sans','Noto_Sans_CJK_SC',sans-serif] text-[24px] text-[#1e395b]">
      <div className="flex h-[1582px] w-[2322px] flex-col overflow-hidden rounded-[16px] border-2 border-[#949fb3] bg-[#cfdcee]">
        <TitleBar />
        <Ribbon />
        <DocumentTabs />
        <OutboundPage />
        <StatusBar />
      </div>

      <TransferDialog />

      {/* Step Markers */}
      <div className="absolute top-[98px] left-[652px] h-[172px] w-[140px] border-[5px] border-[#eb0606]"></div>
      <div className="absolute top-[329px] left-[395px] h-[972px] w-[1645px] border-[5px] border-[#eb0606]"></div>
      <div className="absolute top-[756px] left-[1125px] h-[67px] w-[152px] border-[5px] border-[#eb0606]"></div>
      <svg viewBox="0 0 140 120" className="absolute top-[255px] left-[790px] h-[120px] w-[140px]">
        <path d="M8 10Q8 5 13 5L17 7 119 89 118 78Q119 74 122 77L134 112 99 106Q95 103 98 100L109 99 10 14Q8 12 8 10Z" fill="#eb0606" />
      </svg>
    </div>
  );
}
